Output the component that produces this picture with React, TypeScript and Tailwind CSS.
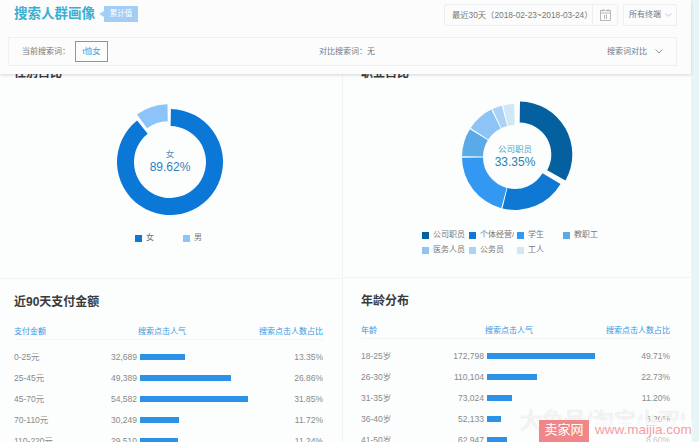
const cjk = "font-['Liberation_Sans','Noto_Sans_CJK_SC',sans-serif]";

type Slice = { pct: number; color: string; pop?: number };

function arc(cx: number, cy: number, r0: number, r1: number, a0: number, a1: number) {
  const p = (r: number, a: number) => {
    const t = ((a - 90) * Math.PI) / 180;
    return `${(cx + r * Math.cos(t)).toFixed(2)} ${(cy + r * Math.sin(t)).toFixed(2)}`;
  };
  const big = a1 - a0 > 180 ? 1 : 0;
  return `M${p(r1, a0)} A${r1} ${r1} 0 ${big} 1 ${p(r1, a1)} L${p(r0, a1)} A${r0} ${r0} 0 ${big} 0 ${p(r0, a0)} Z`;
}

function Donut({ slices, outer, inner, gap }: { slices: Slice[]; outer: number; inner: number; gap: number }) {
  let a = 0;
  const size = 124;
  const c = size / 2;
  return (
    <svg width={size} height={size} viewBox={`0 0 ${size} ${size}`}>
      {slices.map((s) => {
        const start = a;
        a += s.pct * 3.6;
        const mid = (((start + a) / 2 - 90) * Math.PI) / 180;
        const pop = s.pop ?? 0;
        return (
          <path
            key={s.color + s.pct}
            d={arc(c + pop * Math.cos(mid), c + pop * Math.sin(mid), inner, outer, start + gap, a - gap)}
            fill={s.color}
          />
        );
      })}
    </svg>
  );
}

function Legend({ color, label, className }: { color: string; label: string; className: string }) {
  return (
    <div className={`flex items-center gap-[4px] ${className}`}>
      <span className="size-[7px] shrink-0" style={{ background: color }} />
      <span className="whitespace-nowrap overflow-hidden">{label}</span>
    </div>
  );
}

function BarTable({ title, head, rows }: { title: string; head: string; rows: [string, string, number, string][] }) {
  return (
    <div className="h-[164px] pt-[13px] overflow-hidden">
      <h2 className="text-[12px] leading-[20px] font-bold text-[#3a3a3a]">{title}</h2>
      <div className="mt-[13px] flex h-[15px] items-start border-b border-[#f2f4f5] text-[8px] leading-[14px] text-[#3b97e3]">
        <span className="w-[111px]">{head}</span>
        <span className="w-[74px] text-center">搜索点击人气</span>
        <span className="flex-1 text-right">搜索点击人数占比</span>
      </div>
      <div className="pt-[7px]">
        {rows.map(([label, num, w, pct]) => (
          <div key={label} className="flex h-[21px] items-center text-[8.5px] text-[#8a8a8a]">
            <span className="w-[68px]">{label}</span>
            <span className="w-[55px] text-right">{num}</span>
            <div className="ml-[3px] flex-1 pb-[2px]">
              <div className="h-[6px] bg-[#2b92e8]" style={{ width: w }} />
            </div>
            <span>{pct}</span>
          </div>
        ))}
      </div>
    </div>
  );
}

const jobs: Slice[] = [
  { pct: 33.35, color: "#04609f", pop: 5 },
  { pct: 20.65, color: "#0f78d2" },
  { pct: 21, color: "#3398f2" },
  { pct: 9, color: "#5aaae8" },
  { pct: 8.8, color: "#8dc4f5" },
  { pct: 3.4, color: "#a9d2f6" },
  { pct: 3.8, color: "#d0e8f6" },
];

export default function App() {
  return (
    <div className={`relative h-[442px] w-[699px] overflow-hidden bg-[#fcfdfd] ${cjk}`}>
      <header className="relative z-10 h-[74px] w-[691px] bg-[#fcfcfd] shadow-[0_1px_3px_rgba(0,0,0,0.16)]">
        <div className="flex h-[37px] items-start pl-[14px] pr-[14px]">
          <h1 className="mt-[4px] text-[13.5px] leading-[20px] font-bold text-[#3caed0]">搜索人群画像</h1>
          <span className="ml-[4px] mt-[11px] size-0 border-y-[3px] border-r-[5px] border-y-transparent border-r-[#a8d0f5]" />
          <span className="mt-[6px] h-[16px] w-[34px] bg-[#a4cdf6] text-center text-[7.5px] leading-[16px] text-white">累计值</span>
          <div className="ml-auto mt-[4px] flex h-[22px] w-[174px] items-center rounded-[2px] border border-[#eceef0] text-[8.3px] text-[#777]">
            <span className="flex-1 pl-[7px] whitespace-nowrap">最近30天（2018-02-23~2018-03-24）</span>
            <span className="flex h-full w-[25px] items-center justify-center border-l border-[#eceef0]">
              <svg width="11" height="12" viewBox="0 0 11 12" fill="none" stroke="#a8a8a8" strokeWidth="0.8">
                <rect x="0.5" y="1.5" width="10" height="10" />
                <path d="M0.5 4h10M3 0v2.5M8 0v2.5M4.5 6v4M6.5 6h-1M6.5 6v4" />
              </svg>
            </span>
          </div>
          <div className="ml-[5px] mt-[4px] flex h-[22px] w-[54px] items-center rounded-[2px] border border-[#eceef0] pl-[5px] text-[8px] text-[#777]">
            所有终端
            <svg className="ml-[4px]" width="7" height="4" viewBox="0 0 7 4" fill="none" stroke="#b5b5b5" strokeWidth="0.8">
              <path d="M0.5 0.5 3.5 3.2 6.5 0.5" />
            </svg>
          </div>
        </div>
        <div className="mx-[8px] flex h-[29px] w-[669px] items-center border border-[#eef0f2] text-[8px] text-[#777]">
          <span className="ml-[13px] w-[53px]">当前搜索词：</span>
          <span className="h-[21px] w-[33px] border border-[#5da4dc] text-center leading-[19px] text-[#4b9cd8]">t恤女</span>
          <span className="ml-[211px]">对比搜索词：无</span>
          <span className="ml-auto">搜索词对比</span>
          <svg className="ml-[8px] mr-[13px]" width="8" height="5" viewBox="0 0 8 5" fill="none" stroke="#888" strokeWidth="0.9">
            <path d="M0.5 0.5 4 4 7.5 0.5" />
          </svg>
        </div>
      </header>

      {/* report panels, top row slides under the header */}
      <main className="-mt-[16px] grid w-[691px] grid-cols-[343px_348px]">
        <section className="h-[220px] border-r border-[#f1f3f5] pl-[14px]">
          <h2 className="mt-[5px] text-[12px] leading-[20px] font-bold text-[#3a3a3a]">性别占比</h2>
          <div className="relative ml-[94px] mt-[17px] h-[124px] w-[124px]">
            <Donut
              outer={53}
              inner={36}
              gap={1}
              slices={[
                { pct: 89.62, color: "#0b78d8" },
                { pct: 10.38, color: "#8cc3f8", pop: 5 },
              ]}
            />
            <div className="absolute inset-0 flex flex-col items-center justify-center pb-[2px]">
              <span className="text-[8.5px] leading-[12px] text-[#5f8fb8]">女</span>
              <span className="text-[12px] leading-[14px] text-[#2f7fbe]">89.62%</span>
            </div>
          </div>
          <div className="ml-[121px] mt-[8px] flex text-[8px] text-[#777]">
            <Legend color="#0b78d8" label="女" className="w-[48px]" />
            <Legend color="#8cc3f8" label="男" className="w-[48px]" />
          </div>
        </section>
        <section className="h-[220px] border-b border-[#f1f3f5] pl-[18px]">
          <h2 className="mt-[5px] text-[12px] leading-[20px] font-bold text-[#3a3a3a]">职业占比</h2>
          <div className="relative ml-[92px] mt-[12px] h-[124px] w-[124px]">
            <Donut outer={53} inner={32} gap={0.7} slices={jobs} />
            <div className="absolute inset-0 flex flex-col items-center justify-center pb-[2px]">
              <span className="text-[8.5px] leading-[12px] text-[#57a8c7]">公司职员</span>
              <span className="text-[12px] leading-[14px] text-[#2a7fb0]">33.35%</span>
            </div>
          </div>
          <div className="ml-[61px] mt-[11px] grid w-[190px] grid-cols-[47px_48px_46px_49px] gap-y-[5px] text-[8px] leading-[10px] text-[#777]">
            <Legend color="#04609f" label="公司职员" className="" />
            <Legend color="#0f78d2" label="个体经营/" className="" />
            <Legend color="#3398f2" label="学生" className="" />
            <Legend color="#5aaae8" label="教职工" className="" />
            <Legend color="#8dc4f5" label="医务人员" className="" />
            <Legend color="#a9d2f6" label="公务员" className="" />
            <Legend color="#d0e8f6" label="工人" className="" />
          </div>
        </section>
        <section className="border-r border-t border-[#f1f3f5] pl-[14px] pr-[19px]">
          <BarTable
            title="近90天支付金额"
            head="支付金额"
            rows={[
              ["0-25元", "32,689", 45, "13.35%"],
              ["25-45元", "49,389", 91, "26.86%"],
              ["45-70元", "54,582", 108, "31.85%"],
              ["70-110元", "30,249", 39, "11.72%"],
              ["110-220元", "29,510", 38, "11.24%"],
            ]}
          />
        </section>
        <section className="pl-[18px] pr-[21px]">
          <BarTable
            title="年龄分布"
            head="年龄"
            rows={[
              ["18-25岁", "172,798", 108, "49.71%"],
              ["26-30岁", "110,104", 50, "22.73%"],
              ["31-35岁", "73,024", 25, "11.20%"],
              ["36-40岁", "52,133", 14, "6.20%"],
              ["41-50岁", "62,947", 20, "8.60%"],
            ]}
          />
        </section>
      </main>

      {/* teal strip on the right edge */}
      <div className="absolute inset-y-0 right-0 w-[8px] bg-[#e6f6f6]" />

      {/* watermark */}
      <div className="absolute bottom-[9px] left-[520px] whitespace-nowrap text-[22px] leading-[24px] text-white/80 [text-shadow:0_0_1px_#c8c8c8]">大鱼号/淘宝小双!</div>
      <div className="absolute bottom-0 left-[539px] flex h-[22px] items-stretch">
        <span className="flex w-[50px] items-center justify-center bg-[#ef8688] pb-[2px] text-[13px] text-white">卖家网</span>
        <span className="bg-white/50 pb-[2px] pl-[6px] text-[13.5px] leading-[19px] text-[#f3a0a4]">www.maijia.com</span>
      </div>
    </div>
  );
}
